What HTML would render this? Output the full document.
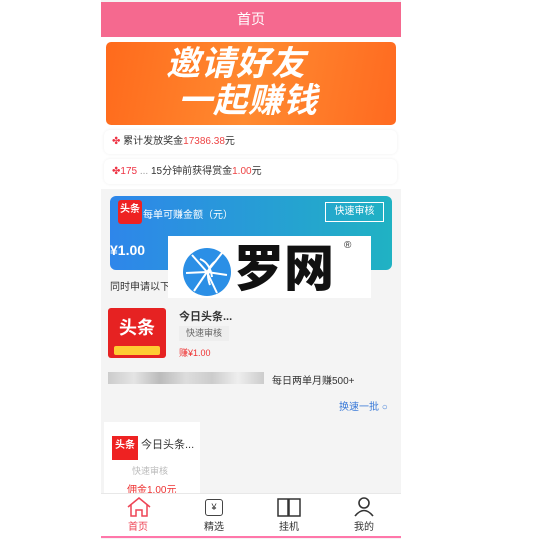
<!DOCTYPE html><html><head><meta charset="utf-8"><style>
*{margin:0;padding:0;box-sizing:border-box}
body{width:539px;height:539px;background:#fff;font-family:"Liberation Sans","Noto Sans CJK SC",sans-serif;position:relative;overflow:hidden;font-size:10px;color:#333}
.a{position:absolute}
</style></head><body>
<div class="a" style="left:101px;top:0;width:300px;height:539px;background:#f4f4f4"></div>
<div class="a" style="left:101px;top:2px;width:300px;height:35px;background:#f5698f;color:#fff;font-size:14px;text-align:center;line-height:35px">首页</div>
<div class="a" style="left:101px;top:37px;width:300px;height:152px;background:#fff"></div>
<div class="a" style="left:106px;top:42px;width:290px;height:83px;border-radius:5px;background:linear-gradient(100deg,#ff6a1c,#ff8a30 50%,#ff6a20);overflow:hidden">
<div class="a" style="left:60px;top:4px;font-size:34px;font-weight:bold;color:#fff;line-height:36px;font-style:italic;letter-spacing:1px">邀请好友</div>
<div class="a" style="left:72px;top:41px;font-size:34px;font-weight:bold;color:#fff;line-height:36px;font-style:italic;letter-spacing:1px">一起赚钱</div>
</div>
<div class="a" style="left:104px;top:130px;width:293px;height:24px;background:#fff;border-radius:6px;box-shadow:0 0 3px #eee;line-height:24px;padding-left:8px"><span style="color:#e34">✤</span> 累计发放奖金<span style="color:#e44">17386.38</span>元</div>
<div class="a" style="left:104px;top:159px;width:293px;height:25px;background:#fff;border-radius:6px;box-shadow:0 0 3px #eee;line-height:25px;padding-left:8px"><span style="color:#e34">✤175</span> <span style="color:#999">...</span> 15分钟前获得赏金<span style="color:#e44">1.00</span>元</div>
<div class="a" style="left:110px;top:196px;width:282px;height:74px;border-radius:6px;background:linear-gradient(90deg,#2e86ea,#20b2c3)"></div>
<div class="a" style="left:118px;top:200px;width:24px;height:24px;background:#e22;border-radius:3px;color:#fff;font-size:10px;font-weight:bold;text-align:center;line-height:20px">头条</div>
<div class="a" style="left:143px;top:206px;color:#fff;font-size:10px">每单可赚金额（元）</div>
<div class="a" style="left:325px;top:202px;width:59px;height:20px;border:1px solid #fff;color:#fff;font-size:10px;text-align:center;line-height:18px">快速审核</div>
<div class="a" style="left:110px;top:242px;color:#fff;font-size:14px;font-weight:bold">¥1.00</div>
<div class="a" style="left:110px;top:278px;font-size:10px">同时申请以下</div>
<div class="a" style="left:340px;top:278px;font-size:10px;color:#3a7ad8">批 ○</div>
<div class="a" style="left:168px;top:236px;width:203px;height:62px;background:#fff"></div>
<svg class="a" style="left:182px;top:247px" width="50" height="50" viewBox="0 0 50 50"><circle cx="25" cy="25" r="24" fill="#2b8fe6"/><path d="M25 25L10 8M25 25L40 6M25 25L45 28M25 25L35 46M25 25L12 44M25 25L4 26M18 12Q28 16 30 30M34 14Q22 22 28 38" stroke="#fff" stroke-width="2" fill="none"/></svg>
<div class="a" style="left:234px;top:240px;font-size:50px;font-weight:900;color:#111;line-height:58px">罗网</div>
<div class="a" style="left:344px;top:240px;font-size:10px">®</div>
<div class="a" style="left:108px;top:308px;width:58px;height:50px;background:#e62222;border-radius:3px;color:#fff;font-size:18px;font-weight:bold;text-align:center;line-height:40px">头条<div style="position:absolute;left:6px;bottom:3px;width:46px;height:9px;background:#fc3;border-radius:2px"></div></div>
<div class="a" style="left:179px;top:308px;font-size:11px;font-weight:bold">今日头条...</div>
<div class="a" style="left:179px;top:326px;width:50px;height:15px;background:#eee;color:#666;font-size:9px;text-align:center;line-height:15px">快速审核</div>
<div class="a" style="left:179px;top:346px;color:#e33;font-size:9px">赚¥1.00</div>
<div class="a" style="left:108px;top:372px;width:156px;height:12px;background:linear-gradient(90deg,#ccc,#e4e4e4,#bbb,#ddd,#ccc,#eee,#ccc)"></div>
<div class="a" style="left:272px;top:372px;font-size:10px">每日两单月赚500+</div>
<div class="a" style="left:339px;top:398px;font-size:10px;color:#3a7ad8">换速一批 ○</div>
<div class="a" style="left:104px;top:422px;width:96px;height:72px;background:#fff"></div>
<div class="a" style="left:112px;top:436px;width:26px;height:24px;background:#e22;color:#fff;font-size:10px;font-weight:bold;text-align:center;line-height:20px">头条</div>
<div class="a" style="left:141px;top:436px;font-size:11px">今日头条...</div>
<div class="a" style="left:132px;top:464px;font-size:9px;color:#bbb">快速审核</div>
<div class="a" style="left:127px;top:481px;font-size:10px;color:#e33">佣金1.00元</div>
<div class="a" style="left:101px;top:493px;width:300px;height:44px;background:#fff;border-top:1px solid #e8e8e8"></div>
<div class="a" style="left:101px;top:536px;width:300px;height:2px;background:#f7a"></div>
<svg class="a" style="left:126px;top:496px" width="26" height="22" viewBox="0 0 26 22"><path d="M2 11L13 2L24 11M5 9V20H10V14H16V20H21V9" stroke="#e45" stroke-width="1.5" fill="none"/></svg>
<div class="a" style="left:128px;top:518px;font-size:10px;color:#e45">首页</div>
<div class="a" style="left:205px;top:499px;width:18px;height:17px;border:1.5px solid #444;border-radius:3px;text-align:center;font-size:9px;line-height:14px">¥</div>
<div class="a" style="left:204px;top:518px;font-size:10px">精选</div>
<svg class="a" style="left:277px;top:497px" width="24" height="20" viewBox="0 0 24 20"><path d="M1 2H11V19H1ZM12 2H23V19H12Z" stroke="#333" stroke-width="1.5" fill="none"/></svg>
<div class="a" style="left:279px;top:518px;font-size:10px">挂机</div>
<svg class="a" style="left:353px;top:497px" width="22" height="20" viewBox="0 0 22 20"><circle cx="11" cy="6" r="5" stroke="#333" stroke-width="1.6" fill="none"/><path d="M2 19Q11 8 20 19" stroke="#333" stroke-width="1.6" fill="none"/></svg>
<div class="a" style="left:354px;top:518px;font-size:10px">我的</div>
</body></html>
